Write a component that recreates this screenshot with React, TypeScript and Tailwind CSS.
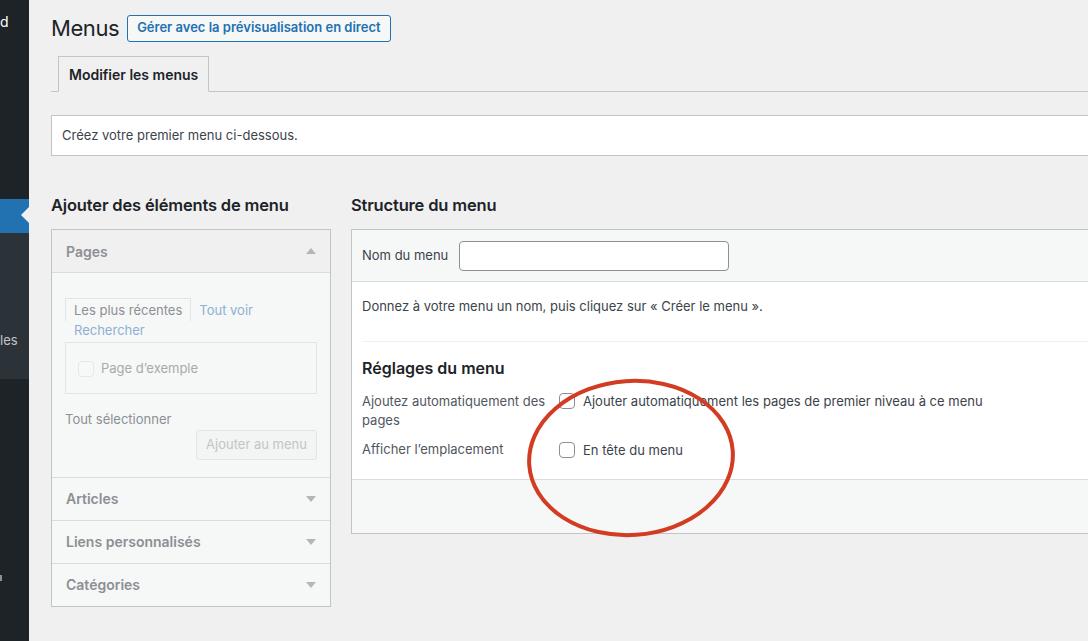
import React from 'react';

function TriangleUp() {
  return (
    <svg width="10" height="6" viewBox="0 0 10 6" className="text-[#b4b6b9]">
      <path d="M0 6 L5 0 L10 6 Z" fill="currentColor" />
    </svg>
  );
}

function TriangleDown() {
  return (
    <svg width="10" height="6" viewBox="0 0 10 6" className="text-[#b4b6b9]">
      <path d="M0 0 L10 0 L5 6 Z" fill="currentColor" />
    </svg>
  );
}

function Sidebar() {
  return (
    <div className="flex w-[29px] shrink-0 flex-col bg-[#1d2327] text-[14px]">
      <div className="flex h-[44px] items-center text-white">
        <span className="leading-[18px]">d</span>
      </div>
      <div className="h-[155px]" />
      <div className="relative h-[34px] bg-[#2271b1]">
        <span className="absolute right-0 top-[8px] h-0 w-0 border-y-[8px] border-r-[8px] border-y-transparent border-r-[#f0f0f1]" />
      </div>
      <div className="flex h-[146px] flex-col justify-end bg-[#2c3338] pb-[30px] text-[13px] text-[#c3c4c7]">
        <span className="leading-[18px]">les</span>
      </div>
      <div className="h-[196px]" />
      <div className="h-[6px] w-[2px] bg-[#8c8f94]" />
    </div>
  );
}

function AddItems() {
  const rows = ['Articles', 'Liens personnalisés', 'Catégories'];
  return (
    <div className="w-[280px] shrink-0">
      <h2 className="h-[37px] pt-[2px] text-[16.5px] font-semibold leading-[22px] tracking-[-0.01em] text-[#1d2327]">
        Ajouter des éléments de menu
      </h2>
      <div className="border border-[#c3c4c7] bg-[#f6f7f7]">
        <div className="flex h-[43px] items-center justify-between border-b border-[#dcdcde] bg-[#f0f0f1] pl-[14px] pr-[14px]">
          <span className="text-[14px] font-semibold text-[#8c8f94]">Pages</span>
          <TriangleUp />
        </div>
        <div className="px-[13px] pb-[17px] pt-[25px] text-[13px]">
          <div className="flex flex-wrap items-end leading-[19px]">
            <span className="border border-b-0 border-[#e3e4e6] px-[8px] pb-[1px] pt-[2px] text-[#8c8f94]">
              Les plus récentes
            </span>
            <span className="ml-[8px] pb-[1px] text-[#8fb0d3]">Tout voir</span>
            <span className="ml-[9px] w-full text-[#8fb0d3]">Rechercher</span>
          </div>
          <div className="mt-[2px] flex h-[52px] items-center border border-[#e3e4e6] pl-[12px] pt-[2px]">
            <span className="h-[16px] w-[16px] rounded-[4px] border border-[#e6e7e8] bg-[#f8f8f8]" />
            <span className="ml-[7px] text-[#a7aaad]">Page d’exemple</span>
          </div>
          <div className="mt-[16px] text-[#8c8f94]">Tout sélectionner</div>
          <div className="flex justify-end">
            <span className="flex h-[30px] w-[121px] items-center justify-center rounded-[3px] border border-[#e3e4e6] bg-[#f3f4f4] text-[#c3c4c7]">
              Ajouter au menu
            </span>
          </div>
        </div>
        {rows.map((r) => (
          <div
            key={r}
            className="flex h-[43px] items-center justify-between border-t border-[#dcdcde] pl-[14px] pr-[14px]"
          >
            <span className="text-[14px] font-semibold text-[#8c8f94]">{r}</span>
            <TriangleDown />
          </div>
        ))}
      </div>
    </div>
  );
}

function Structure() {
  return (
    <div className="w-[760px] shrink-0">
      <h2 className="h-[37px] pt-[2px] text-[16.5px] font-semibold leading-[22px] tracking-[-0.01em] text-[#1d2327]">
        Structure du menu
      </h2>
      <div className="border border-[#c3c4c7] bg-white text-[13px] text-[#3c434a]">
        <div className="flex h-[52px] items-center border-b border-[#dcdcde] bg-[#f6f7f7] px-[10px] pt-[1px]">
          <span>Nom du menu</span>
          <input
            className="ml-[11px] h-[30px] w-[270px] rounded-[4px] border border-[#8c8f94] bg-white px-2 outline-none"
            type="text"
          />
        </div>
        <div className="px-[10px]">
          <p className="flex h-[59px] items-center pb-[10px]">
            Donnez à votre menu un nom, puis cliquez sur « Créer le menu ».
          </p>
          <div className="border-t border-[#f0f0f1] pb-[19px] pt-[15px]">
            <h3 className="text-[16px] font-semibold leading-[22px] text-[#1d2327]">Réglages du menu</h3>
            <div className="mt-[13px] flex">
              <div className="w-[197px] leading-[19px] text-[#50575e]">
                Ajoutez automatiquement des pages
              </div>
              <div className="flex items-start">
                <span className="mt-[1px] h-[16px] w-[16px] rounded-[4px] border border-[#8c8f94] bg-white" />
                <span className="ml-[8px] leading-[19px]">
                  Ajouter automatiquement les pages de premier niveau à ce menu
                </span>
              </div>
            </div>
            <div className="mt-[10px] flex">
              <div className="w-[197px] leading-[19px] text-[#50575e]">Afficher l’emplacement</div>
              <div className="flex items-start">
                <span className="mt-[2px] h-[16px] w-[16px] rounded-[4px] border border-[#8c8f94] bg-white" />
                <span className="ml-[8px] mt-[1px] leading-[19px]">En tête du menu</span>
              </div>
            </div>
          </div>
        </div>
        <div className="h-[54px] border-t border-[#dcdcde] bg-[#f6f7f7]" />
      </div>
    </div>
  );
}

export default function App() {
  return (
    <div className="flex h-[641px] w-[1088px] overflow-hidden bg-[#f0f0f1] font-['Inter','Liberation_Sans',sans-serif] text-[#3c434a]">
      <Sidebar />
      <div className="relative w-[1200px] shrink-0 pl-[22px]">
        <div className="flex items-center pt-[14px]">
          <h1 className="text-[22px] font-normal leading-[28px] tracking-[-0.02em] text-[#1d2327]">Menus</h1>
          <span className="ml-[8px] flex h-[27px] items-center rounded-[3px] border border-[#2271b1] bg-[#f6f7f7] px-[9px] text-[13px] font-semibold text-[#2271b1]">
            Gérer avec la prévisualisation en direct
          </span>
        </div>
        <div className="mt-[14px] flex border-b border-[#c3c4c7] pl-[7px]">
          <span className="-mb-px flex h-[36px] items-center border border-[#c3c4c7] border-b-[#f0f0f1] bg-[#f0f0f1] px-[10px] text-[14px] font-semibold text-[#1d2327]">
            Modifier les menus
          </span>
        </div>
        <div className="mt-[23px] flex h-[41px] items-center border border-[#c3c4c7] bg-white px-[10px] text-[13px]">
          Créez votre premier menu ci-dessous.
        </div>
        <div className="mt-[36px] flex gap-[20px]">
          <AddItems />
          <Structure />
        </div>
        <svg
          className="pointer-events-none absolute left-[496px] top-[376px]"
          width="212"
          height="164"
          viewBox="0 0 212 164"
        >
          <ellipse
            cx="106"
            cy="82"
            rx="102"
            ry="77"
            fill="none"
            stroke="#d23c22"
            strokeWidth="4"
            transform="rotate(-4 106 82)"
          />
        </svg>
      </div>
    </div>
  );
}
